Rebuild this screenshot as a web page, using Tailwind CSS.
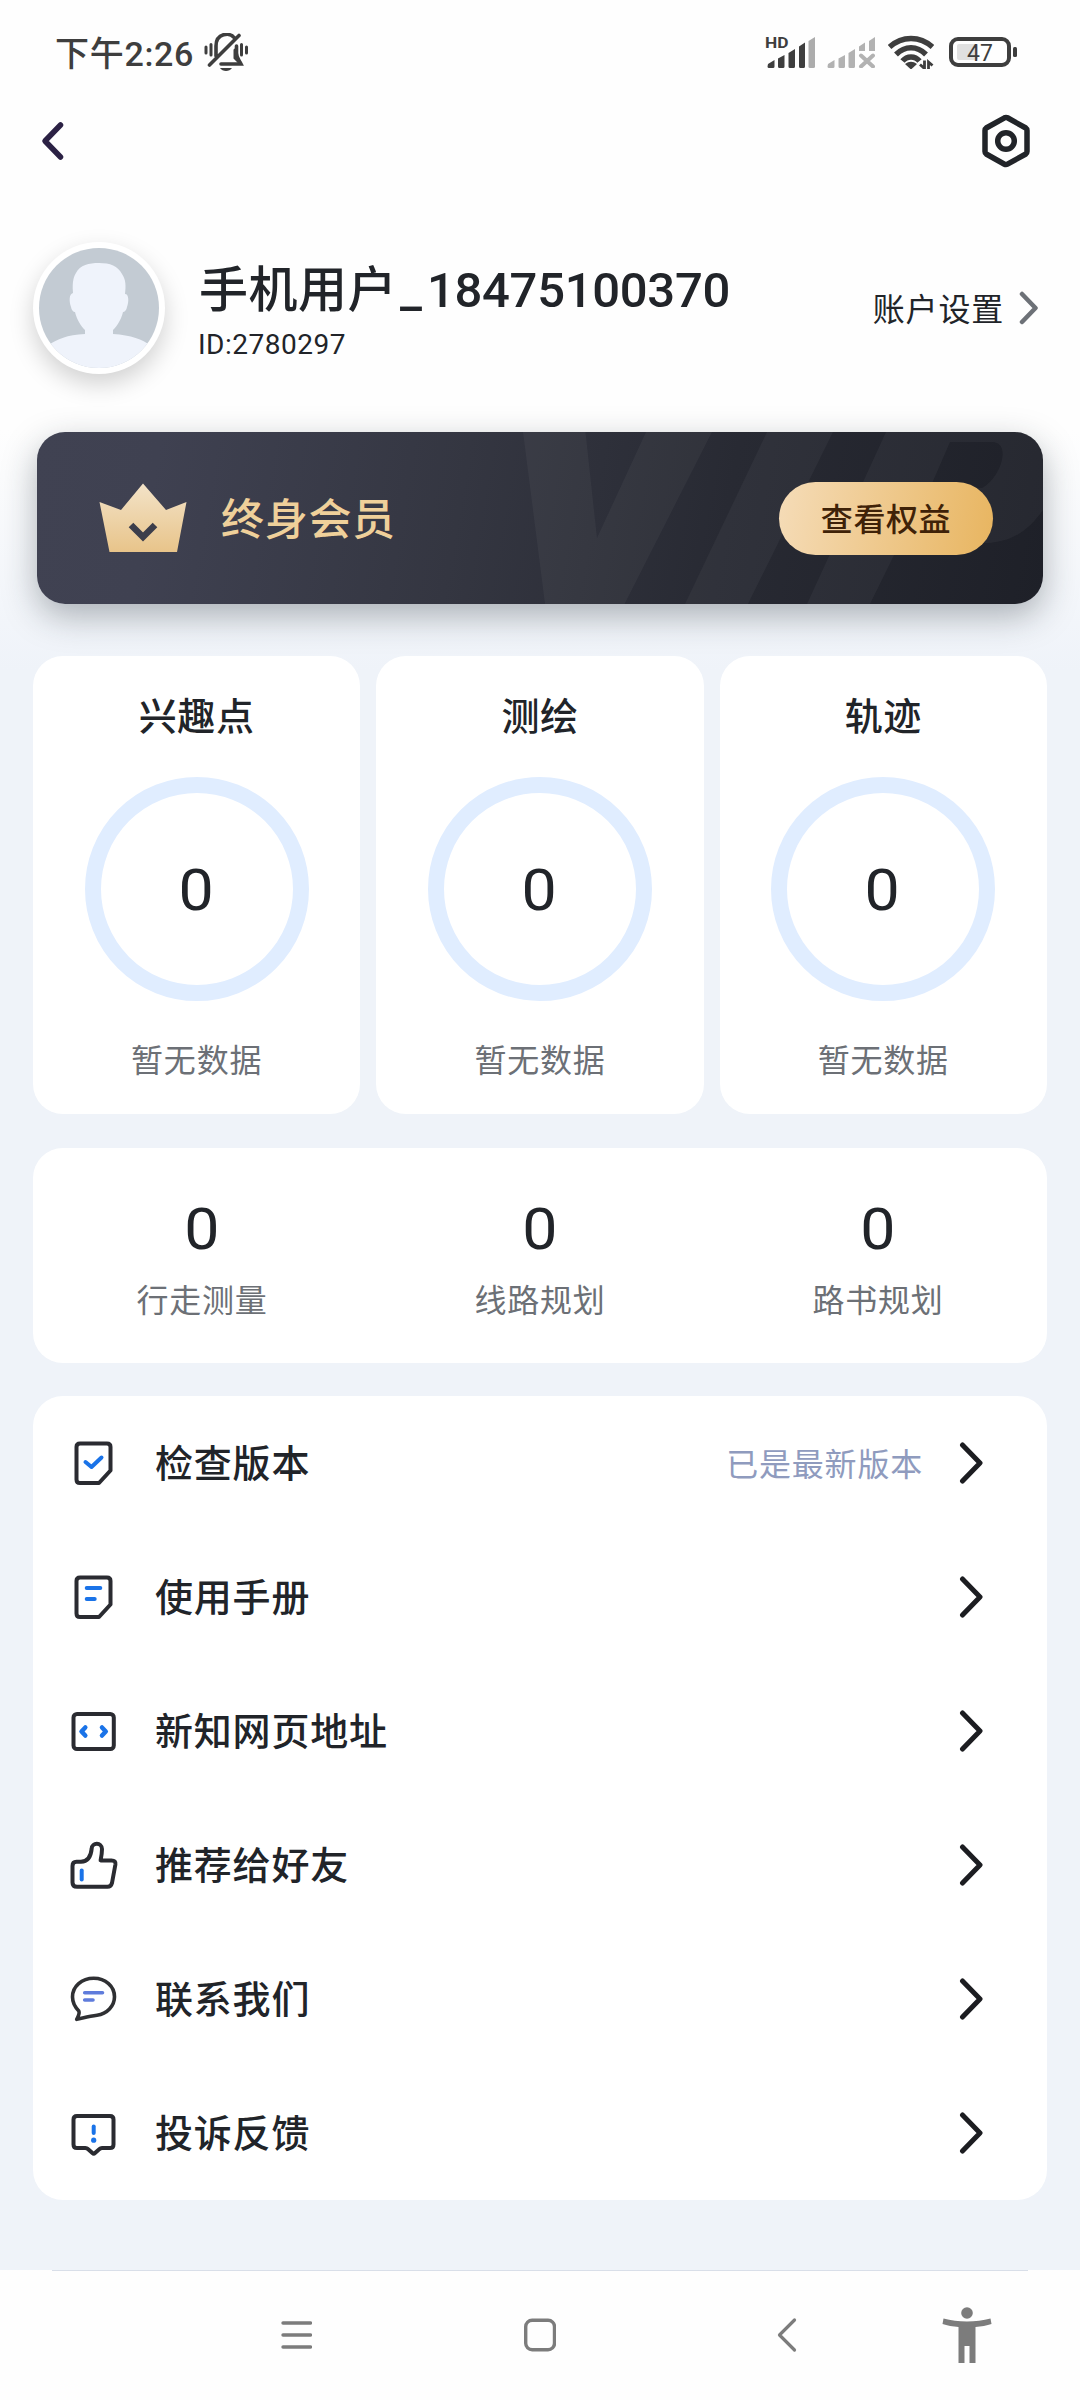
<!DOCTYPE html>
<html lang="zh-CN">
<head>
<meta charset="utf-8">
<title>个人中心</title>
<script src="https://cdn.jsdelivr.net/npm/@tailwindcss/browser@4"></script>
</head>
<body class="w-[1080px] h-[2400px] overflow-hidden bg-[#eef2f9] text-[#212429] font-['Roboto','Noto_Sans_CJK_SC',sans-serif]">
<div class="flex flex-col w-[1080px] h-[2400px] bg-[linear-gradient(to_bottom,#fefefe_430px,#eff3f9_670px)]">

  <!-- Status bar -->
  <header class="flex items-center h-[104px] pl-[55px] pr-[62px] text-[#3e3e3e]">
    <div class="text-[34px] leading-[40px] pt-[3px] font-medium tracking-[0.7px] w-[149px] whitespace-nowrap">下午2:26</div>
    <svg class="w-11 h-[38px]" viewBox="0 0 44 38" fill="none" stroke="currentColor" stroke-width="3" stroke-linecap="round">
      <path d="M2 14v6M7 11.500v10.500M37.500 11.500v10.500M42.500 14v6"/>
      <path d="M12 23V13C12 0 26 -1 30 4.500M35 2.500L5.500 32" stroke-width="3.600"/>
      <path d="M32.500 13V20C32.500 25 35 27 37 31H17" stroke-width="3.600"/>
      <path d="M31 17V25L35 29" stroke-width="3"/>
      <path d="M16 35H28C25.500 39 18.500 39 16 35Z" fill="currentColor" stroke="none"/>
    </svg>
    <div class="flex items-center ml-auto">
      <svg class="w-[50px] h-9 -mt-1" viewBox="0 -4 50 36" fill="currentColor">
        <text x="0" y="11.500" font-size="15.500" font-weight="700" font-family="Roboto" textLength="23.500" lengthAdjust="spacingAndGlyphs">HD</text>
        <path d="M3 28L9.500 24V30.500Q9.500 32 8 32H4Q2.500 32 2.500 30.500ZM13 22.500L19.500 19V30.500Q19.500 32 18 32H14.500Q13 32 13 30.500ZM23.500 17L30 13V30.500Q30 32 28.500 32H25Q23.500 32 23.500 30.500ZM34 10.500L40 6.500V30.500Q40 32 38.500 32H35.500Q34 32 34 30.500Z"/>
        <path d="M43.500 5L50 1V30.500Q50 32 48.500 32H45Q43.500 32 43.500 30.500Z" fill="#acacac"/>
      </svg>
      <svg class="w-12 h-8 ml-3" viewBox="0 0 48 32" fill="#b2b2b2">
        <path d="M1 28L7.500 24V30.500Q7.500 32 6 32H2Q0.500 32 0.500 30.500ZM11.500 22.500L18 19V30.500Q18 32 16.500 32H13Q11.500 32 11.500 30.500ZM21.500 17L28 13V30.500Q28 32 26.500 32H23Q21.500 32 21.500 30.500ZM32 10.500L38 6.500V15H32ZM42 5L48 1V15H42Z"/>
        <path d="M34 19.500L46 30.500M46 19.500L34 30.500" stroke="#b2b2b2" stroke-width="4" stroke-linecap="round"/>
      </svg>
      <svg class="w-[46px] h-[34px] ml-[13px]" viewBox="0 0 46 34" fill="none" stroke="currentColor" stroke-width="5.500">
        <path d="M1.500 12C14 0.500 32 0.500 44.500 12M8 19.500C17 10.500 29 10.500 38 19.500M14.500 26C19 20.500 27 20.500 31.500 26"/>
        <path d="M17 29Q23 24.500 29 29L23 34.500Z" fill="currentColor" stroke="none"/>
        <path d="M36.500 25.500V33.500L32 29.500M40.500 34V27L44.500 30.500" stroke-width="2.800"/>
      </svg>
      <svg class="w-[69px] h-[30px] ml-[15px]" viewBox="0 0 69 30">
        <rect x="8" y="7" width="21" height="16" rx="2" fill="#e0e0e0"/>
        <rect x="2" y="2" width="58" height="26" rx="7" fill="none" stroke="currentColor" stroke-width="4"/>
        <rect x="64" y="10" width="4" height="10" rx="1.500" fill="currentColor"/>
        <text x="31" y="23.500" font-size="23" font-weight="400" font-family="Roboto" text-anchor="middle" fill="currentColor">47</text>
      </svg>
    </div>
  </header>

  <!-- Title bar -->
  <nav class="flex items-center justify-between h-[73px] pl-[41px] pr-[50px]">
    <svg class="w-6 h-10" viewBox="0 0 24 40" fill="none" stroke="#2b2144" stroke-width="5.500" stroke-linecap="round" stroke-linejoin="round"><path d="M19.500 4L4 20L19.500 36"/></svg>
    <svg class="w-12 h-14" viewBox="0 0 48 56" fill="none" stroke="#212429" stroke-width="5.500" stroke-linejoin="round">
      <path d="M22.500 4.800Q24 4 25.500 4.800L43.800 15Q45 15.800 45 17.500V38.500Q45 40.200 43.800 41L25.500 51.200Q24 52 22.500 51.200L4.200 41Q3 40.200 3 38.500V17.500Q3 15.800 4.200 15Z"/>
      <circle cx="24" cy="28" r="8.300"/>
    </svg>
  </nav>

  <!-- Profile -->
  <section class="flex items-center mt-[65px] h-[132px] pl-[33px] pr-[41px]">
    <div class="size-[132px] rounded-full bg-white p-1.5 shadow-[0_10px_24px_rgba(0,0,0,0.18)]">
      <svg class="size-[120px] rounded-full bg-[#c3cbd3]" viewBox="0 0 120 120" fill="#eff3fb">
        <path d="M34 45C33 33 35 28 37 25C41 17 50 15 60 15C71 15 79 18 83 26C87 32 87 38 86 46C90 46 90 54 88 59C87 64 84 64 84 64C82 72 78 78 74 82V86C92 87 104 92 111 97L105 120H14L10 97C18 91 28 87 46 86V82C42 78 38 72 36 64C36 64 33 64 32 59C30 53 30 46 34 45Z"/>
      </svg>
    </div>
    <div class="ml-[34px] pt-2.5 flex flex-col">
      <h1 class="text-[49px] leading-[58px] font-medium whitespace-nowrap tracking-[0.5px]">手机用户<span class="ml-[3px] tracking-[5px]">_</span><span class="tracking-[-0.3px]">18475100370</span></h1>
      <p class="text-[28px] leading-[38px] mt-1.5 -ml-px tracking-[0.5px]">ID:2780297</p>
    </div>
    <div class="flex items-center ml-auto">
      <span class="text-[32px] leading-[40px] pt-[3px] tracking-[0.8px]">账户设置</span>
      <svg class="w-5 h-9 ml-[15px]" viewBox="0 0 20 36" fill="none" stroke="#6d7177" stroke-width="4.500" stroke-linecap="round" stroke-linejoin="round"><path d="M3 4L16.500 18L3 32"/></svg>
    </div>
  </section>

  <!-- Membership -->
  <section class="relative mt-[58px] mx-[37px] h-[172px] rounded-[28px] bg-[linear-gradient(100deg,#404252_0%,#3f4151_12%,#343641_42%,#282a33_68%,#1e2028_100%)] shadow-[0_12px_34px_rgba(30,40,50,0.34)]">
    <svg class="absolute inset-0 w-full h-full rounded-[28px]" viewBox="0 0 1006 172" fill="#fff" fill-opacity="0.038">
      <path d="M486 0H548.500L560 106L609 0H675L587.500 172H508Z"/>
      <path d="M730 0H796L711 172H648Z"/>
      <path fill-rule="evenodd" d="M849 0H1006V78C992 98 975 110 950 111H863L833 172H770ZM913 10L893 56H945C964 46 975 10 955 10Z"/>
    </svg>
    <div class="relative flex items-center h-full pl-[62px] pr-[50px]">
      <svg class="w-[88px] h-[70px]" viewBox="0 0 88 70">
        <defs><linearGradient id="gold" x1="0" y1="0" x2="0" y2="1"><stop offset="0" stop-color="#f3e3c8"/><stop offset="1" stop-color="#e8c48a"/></linearGradient></defs>
        <path d="M0.500 19L22 27L44 0.500L67 27L87.500 19L78 69H10.500Z" fill="url(#gold)"/>
        <path d="M32 42L44 54L56 42" fill="none" stroke="#3c3e4b" stroke-width="6.500"/>
      </svg>
      <span class="ml-[34px] pt-1 text-[43px] leading-[50px] font-medium tracking-[0.7px] text-[#efd09a]">终身会员</span>
      <div class="ml-auto w-[214px] h-[73px] pt-[3px] rounded-full flex items-center justify-center bg-[linear-gradient(100deg,#f5dcb8,#e8b560)] text-[#3f2208] text-[32px] font-medium tracking-[0.6px]">查看权益</div>
    </div>
  </section>

  <!-- Data rings -->
  <section class="grid grid-cols-3 gap-4 mt-[52px] mx-[33px] h-[458px]">
    <div class="flex flex-col items-center rounded-[30px] bg-white">
      <h2 class="mt-[38px] h-12 leading-[46px] text-[38px] font-medium tracking-[0.6px]">兴趣点</h2>
      <div class="mt-[35px] size-[224px] rounded-full border-16 border-[#e0edff] flex items-center justify-center text-[57px] pt-1 pr-0.5"><span class="scale-x-110">0</span></div>
      <p class="mt-[37px] text-[32px] leading-[46px] tracking-[0.8px] text-[#6c7076]">暂无数据</p>
    </div>
    <div class="flex flex-col items-center rounded-[30px] bg-white">
      <h2 class="mt-[38px] h-12 leading-[46px] text-[38px] font-medium tracking-[0.6px]">测绘</h2>
      <div class="mt-[35px] size-[224px] rounded-full border-16 border-[#e0edff] flex items-center justify-center text-[57px] pt-1 pr-0.5"><span class="scale-x-110">0</span></div>
      <p class="mt-[37px] text-[32px] leading-[46px] tracking-[0.8px] text-[#6c7076]">暂无数据</p>
    </div>
    <div class="flex flex-col items-center rounded-[30px] bg-white">
      <h2 class="mt-[38px] h-12 leading-[46px] text-[38px] font-medium tracking-[0.6px]">轨迹</h2>
      <div class="mt-[35px] size-[224px] rounded-full border-16 border-[#e0edff] flex items-center justify-center text-[57px] pt-1 pr-0.5"><span class="scale-x-110">0</span></div>
      <p class="mt-[37px] text-[32px] leading-[46px] tracking-[0.8px] text-[#6c7076]">暂无数据</p>
    </div>
  </section>

  <!-- Counters -->
  <section class="grid grid-cols-3 mt-[34px] mx-[33px] h-[215px] rounded-[30px] bg-white text-center">
    <div class="pt-[47px]"><div class="text-[57px] leading-[70px] scale-x-110">0</div><p class="mt-[13px] text-[32px] leading-[46px] tracking-[0.8px] text-[#6c7076]">行走测量</p></div>
    <div class="pt-[47px]"><div class="text-[57px] leading-[70px] scale-x-110">0</div><p class="mt-[13px] text-[32px] leading-[46px] tracking-[0.8px] text-[#6c7076]">线路规划</p></div>
    <div class="pt-[47px]"><div class="text-[57px] leading-[70px] scale-x-110">0</div><p class="mt-[13px] text-[32px] leading-[46px] tracking-[0.8px] text-[#6c7076]">路书规划</p></div>
  </section>

  <!-- Menu -->
  <ul class="mt-[33px] mx-[33px] h-[804px] rounded-[30px] bg-white text-[38px] font-medium tracking-[0.8px]">
    <li class="flex items-center h-[134px] pl-9 pr-[63px]">
      <svg class="size-12 mr-[38px]" viewBox="0 0 48 48" fill="none" stroke="#2a2b31" stroke-width="4" stroke-linejoin="round" stroke-linecap="round"><path d="M11 4.500H38Q41.500 4.500 41.500 8V31.500L30 44H11Q7.500 44 7.500 40.500V8Q7.500 4.500 11 4.500Z"/><path d="M16.500 23L22.500 28L32.500 18.500" stroke="#1a73e8"/></svg>
      <span class="pt-[3px]">检查版本</span>
      <span class="ml-auto mr-[35px] pt-[3px] text-[32px] font-normal text-[#8f9bbe]">已是最新版本</span>
      <svg class="w-[26px] h-[42px]" viewBox="0 0 26 42" fill="none" stroke="#1c1d21" stroke-width="5" stroke-linecap="round" stroke-linejoin="round"><path d="M4.500 3L22 21L4.500 39"/></svg>
    </li>
    <li class="flex items-center h-[134px] pl-9 pr-[63px]">
      <svg class="size-12 mr-[38px]" viewBox="0 0 48 48" fill="none" stroke="#2a2b31" stroke-width="4" stroke-linejoin="round" stroke-linecap="round"><path d="M11 4.500H38Q41.500 4.500 41.500 8V31.500L30 44H11Q7.500 44 7.500 40.500V8Q7.500 4.500 11 4.500Z"/><path d="M17.700 15H31.300M17.700 26H25.700" stroke="#1a73e8"/></svg>
      <span class="pt-[3px]">使用手册</span>
      <svg class="ml-auto w-[26px] h-[42px]" viewBox="0 0 26 42" fill="none" stroke="#1c1d21" stroke-width="5" stroke-linecap="round" stroke-linejoin="round"><path d="M4.500 3L22 21L4.500 39"/></svg>
    </li>
    <li class="flex items-center h-[134px] pl-9 pr-[63px]">
      <svg class="size-12 mr-[38px]" viewBox="0 0 48 48" fill="none" stroke="#2a2b31" stroke-width="4" stroke-linejoin="round" stroke-linecap="round"><rect x="4.500" y="7" width="40.300" height="35" rx="3.500"/><path d="M16.300 20.500L12.500 24.500L16.300 28.500M33 20.500L36.800 24.500L33 28.500" stroke="#1a73e8" stroke-width="4.500"/></svg>
      <span class="pt-[3px]">新知网页地址</span>
      <svg class="ml-auto w-[26px] h-[42px]" viewBox="0 0 26 42" fill="none" stroke="#1c1d21" stroke-width="5" stroke-linecap="round" stroke-linejoin="round"><path d="M4.500 3L22 21L4.500 39"/></svg>
    </li>
    <li class="flex items-center h-[134px] pl-9 pr-[63px]">
      <svg class="size-12 mr-[38px] overflow-visible" viewBox="0 0 48 48" fill="none" stroke="#2a2b31" stroke-width="4" stroke-linejoin="round" stroke-linecap="round"><path d="M7.500 20.800H12C19 20.500 22 15 22.700 7.500C23 1.200 32.800 1.200 33 8C33 12 32.400 15.500 31.600 19.400H42.500Q47 19.400 46.400 23.500L43 42Q42 45.800 38.500 45.800H8Q3.500 45.800 3.500 41.500V25Q3.500 20.800 7.500 20.800Z"/><path d="M12.700 29.500V38.500" stroke="#1a73e8"/></svg>
      <span class="pt-[3px]">推荐给好友</span>
      <svg class="ml-auto w-[26px] h-[42px]" viewBox="0 0 26 42" fill="none" stroke="#1c1d21" stroke-width="5" stroke-linecap="round" stroke-linejoin="round"><path d="M4.500 3L22 21L4.500 39"/></svg>
    </li>
    <li class="flex items-center h-[134px] pl-9 pr-[63px]">
      <svg class="size-12 mr-[38px]" viewBox="0 0 48 48" fill="none" stroke="#2f3033" stroke-width="3.600" stroke-linejoin="round" stroke-linecap="round"><path d="M24.700 3.300C36.500 3.300 45.500 11.300 45.500 21.800C45.500 31 38 39 28 40.200C20 41.200 14 43 7.700 44.300C9.500 41 11 38.500 9.800 36C6 32 3.500 27.500 3.500 22C3.500 11.500 12.800 3.300 24.700 3.300Z"/><path d="M15.700 17.700H33.500M15.700 25H24" stroke="#5f7cdc"/></svg>
      <span class="pt-[3px]">联系我们</span>
      <svg class="ml-auto w-[26px] h-[42px]" viewBox="0 0 26 42" fill="none" stroke="#1c1d21" stroke-width="5" stroke-linecap="round" stroke-linejoin="round"><path d="M4.500 3L22 21L4.500 39"/></svg>
    </li>
    <li class="flex items-center h-[134px] pl-9 pr-[63px]">
      <svg class="size-12 mr-[38px]" viewBox="0 0 48 48" fill="none" stroke="#2a2b31" stroke-width="4" stroke-linejoin="round" stroke-linecap="round"><path d="M8 7H41Q44.500 7 44.500 10.500V35.500Q44.500 39 41 39H33Q31.500 39 30.500 40L26 44Q24.700 45.200 23.400 44L18.900 40Q17.900 39 16.400 39H8Q4.500 39 4.500 35.500V10.500Q4.500 7 8 7Z"/><path d="M24.700 17.500V24" stroke="#1a73e8"/><circle cx="24.700" cy="31.200" r="2.600" fill="#1a73e8" stroke="none"/></svg>
      <span class="pt-[3px]">投诉反馈</span>
      <svg class="ml-auto w-[26px] h-[42px]" viewBox="0 0 26 42" fill="none" stroke="#1c1d21" stroke-width="5" stroke-linecap="round" stroke-linejoin="round"><path d="M4.500 3L22 21L4.500 39"/></svg>
    </li>
  </ul>

  <!-- System navigation -->
  <footer class="mt-auto h-[130px] bg-[#fefefe]">
    <div class="mx-[52px] h-px bg-[#d9dfe9]"></div>
    <div class="flex items-center h-[128px] pl-[280px] text-[#7c7c7c]">
      <svg class="w-8 h-[34px]" viewBox="0 0 32 34" fill="none" stroke="currentColor" stroke-width="3.400" stroke-linecap="round"><path d="M3 5H30.500M3 17H30.500M3 29H30.500"/></svg>
      <svg class="w-8 h-[34px] ml-[212px]" viewBox="0 0 32 34" fill="none" stroke="currentColor" stroke-width="3.400"><rect x="1.700" y="2.200" width="28.800" height="29.600" rx="6.500"/></svg>
      <svg class="w-5 h-9 ml-[221px]" viewBox="0 0 20 36" fill="none" stroke="currentColor" stroke-width="3.200" stroke-linecap="round" stroke-linejoin="round"><path d="M17.500 3L2.500 18L17.500 33"/></svg>
      <svg class="w-[50px] h-14 ml-[145px]" viewBox="0 0 50 56" fill="currentColor"><circle cx="25" cy="6" r="5.800"/><path d="M1.500 11.500C16 15.500 34 15.500 48.500 11.500L49.500 17C45 18.500 39 19.500 33.500 20V56H27.500V39H22.500V56H16.500V20C11 19.500 5 18.500 0.500 17Z"/></svg>
    </div>
  </footer>
</div>
</body>
</html>
